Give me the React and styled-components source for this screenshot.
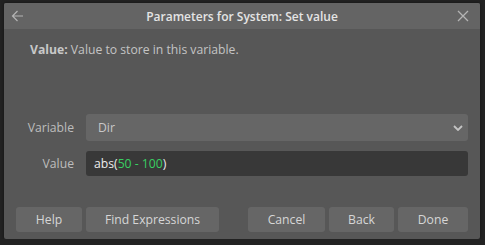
import React from "react";
import styled, { createGlobalStyle } from "styled-components";

const Global = createGlobalStyle`
  html, body { margin: 0; padding: 0; background: #222222; }
  body { font-family: "Open Sans", "Noto Sans", sans-serif; }
  * { box-sizing: border-box; }
`;

const Dialog = styled.div`
  margin: 3px 0 0 4px;
  width: 476px;
  height: 236px;
  background: #575757;
  display: flex;
  flex-direction: column;
  border-radius: 2px;
  overflow: hidden;
  box-shadow: 0 0 3px rgba(0,0,0,0.5);
`;

const TitleBar = styled.div`
  height: 26px;
  background: #646464;
  display: grid;
  grid-template-columns: 30px 1fr 30px;
  align-items: center;
`;

const Title = styled.div`
  text-align: center;
  color: #e4e4e4;
  font-size: 12px;
  font-weight: 600;
`;

const IconBtn = styled.div`
  display: flex;
  align-items: center;
  padding-left: ${(p) => p.$pad}px;
  color: #b4b4b4;
`;

const Body = styled.div`
  flex: 1;
  display: flex;
  flex-direction: column;
  padding: 12px 12px 0;
`;

const Desc = styled.div`
  padding-left: 14px;
  color: #c4c4c4;
  font-size: 12.2px;
  line-height: 18px;
  b { font-weight: 700; color: #c8c8c8; }
`;

const Form = styled.div`
  margin-top: 55px;
  display: grid;
  grid-template-columns: 58px 1fr;
  column-gap: 12px;
  row-gap: 10px;
  align-items: center;
`;

const Label = styled.div`
  text-align: right;
  color: #bdbdbd;
  font-size: 12.2px;
`;

const Select = styled.div`
  height: 27px;
  background: #666666;
  border-radius: 3px;
  display: flex;
  align-items: center;
  justify-content: space-between;
  padding: 0 5px 0 12px;
  color: #c8c8c8;
  font-size: 12.2px;
`;

const Input = styled.div`
  height: 25px;
  background: #383838;
  border-radius: 3px;
  display: flex;
  align-items: center;
  padding: 0 8px;
  color: #ececec;
  font-size: 12.2px;
`;

const Num = styled.span`
  color: #38cf62;
`;

const Footer = styled.div`
  display: flex;
  gap: 4px;
  padding: 0 12px 7px;
`;

const Spacer = styled.div`
  flex: 1;
`;

const Button = styled.div`
  height: 25px;
  width: ${(p) => p.$w}px;
  background: #666666;
  border-radius: 3px;
  color: #d6d6d6;
  font-size: 12.2px;
  display: flex;
  align-items: center;
  justify-content: center;
`;

export default function App() {
  return (
    <>
      <Global />
      <Dialog>
        <TitleBar>
          <IconBtn $pad={7}>
            <svg width="13" height="12" viewBox="0 0 13 12" fill="none" stroke="currentColor" strokeWidth="1.2">
              <path d="M12 6H1.5M6.5 1L1.5 6l5 5" />
            </svg>
          </IconBtn>
          <Title>Parameters for System: Set value</Title>
          <IconBtn $pad={7}>
            <svg width="12" height="12" viewBox="0 0 12 12" fill="none" stroke="currentColor" strokeWidth="1.3">
              <path d="M1 1l10 10M11 1L1 11" />
            </svg>
          </IconBtn>
        </TitleBar>
        <Body>
          <Desc>
            <b>Value:</b> Value to store in this variable.
          </Desc>
          <Form>
            <Label>Variable</Label>
            <Select>
              <span>Dir</span>
              <svg width="10" height="6" viewBox="0 0 10 6" fill="none" stroke="#c4c4c4" strokeWidth="1.8">
                <path d="M1 1l4 4 4-4" />
              </svg>
            </Select>
            <Label>Value</Label>
            <Input>
              abs(<Num>50 - 100</Num>)
            </Input>
          </Form>
        </Body>
        <Footer>
          <Button $w={66}>Help</Button>
          <Button $w={133}>Find Expressions</Button>
          <Spacer />
          <Button $w={77}>Cancel</Button>
          <Button $w={65}>Back</Button>
          <Button $w={70}>Done</Button>
        </Footer>
      </Dialog>
    </>
  );
}
